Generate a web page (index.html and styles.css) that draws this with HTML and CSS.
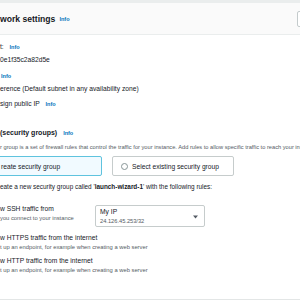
FILE: index.html
```html
<!DOCTYPE html>
<html>
<head>
<meta charset="utf-8">
<link rel="stylesheet" href="styles.css">
</head>
<body>
<div class="page">
  <div class="topband"></div>
  <div class="header">
    <span class="title">work settings</span>
    <span class="info">Info</span>
    <span class="edit"></span>
  </div>
  <div class="content">
    <div class="field f1">
      <div class="label">t: <span class="info">Info</span></div>
      <div class="value">0e1f35c2a82d5e</div>
    </div>
    <div class="field f2">
      <div class="label"><span class="info first">Info</span></div>
      <div class="value">erence (Default subnet in any availability zone)</div>
    </div>
    <div class="field f3">
      <div class="label">sign public IP <span class="info">Info</span></div>
    </div>

    <div class="sg">
      <div class="sg-title">(security groups) <span class="info">Info</span></div>
      <div class="sg-desc">r group is a set of firewall rules that control the traffic for your instance. Add rules to allow specific traffic to reach your instance.</div>
      <div class="tiles">
        <div class="tile selected">reate security group</div>
        <div class="tile"><span class="radio"></span>Select existing security group</div>
      </div>
      <div class="sg-note">eate a new security group called '<b>launch-wizard-1</b>' with the following rules:</div>
    </div>

    <div class="rules">
      <div class="rule first-rule">
        <div class="rule-text">
          <div class="rule-label">w SSH traffic from</div>
          <div class="rule-sub">you connect to your instance</div>
        </div>
        <div class="select">
          <div class="select-text">
            <div class="select-main">My IP</div>
            <div class="select-sub">24.126.45.253/32</div>
          </div>
          <svg class="caret" width="5" height="4" viewBox="0 0 5 4"><path d="M0 0.5 H5 L2.5 3.5 Z" fill="#545b64"/></svg>
        </div>
      </div>
      <div class="rule">
        <div class="rule-text">
          <div class="rule-label">w HTTPS traffic from the internet</div>
          <div class="rule-sub">t up an endpoint, for example when creating a web server</div>
        </div>
      </div>
      <div class="rule">
        <div class="rule-text">
          <div class="rule-label">w HTTP traffic from the internet</div>
          <div class="rule-sub">t up an endpoint, for example when creating a web server</div>
        </div>
      </div>
    </div>
    <div class="footer-line"></div>
  </div>
</div>
</body>
</html>
```

FILE: styles.css
```css
html, body {
  margin: 0;
  padding: 0;
  width: 300px;
  height: 300px;
  overflow: hidden;
  background: #ffffff;
}
.page {
  font-family: "Liberation Sans", Arial, sans-serif;
  color: #16191f;
  font-size: 6.7px;
  white-space: nowrap;
}
.topband {
  height: 3px;
  background: #eaeded;
}
.header {
  height: 31px;
  background: #fafafa;
  border-bottom: 1px solid #eaeded;
  display: flex;
  align-items: center;
}
.title {
  font-weight: 700;
  font-size: 8.6px;
}
.info {
  color: #0073bb;
  font-weight: 700;
  font-size: 5.5px;
  margin-left: 4px;
}
.info.first {
  margin-left: 1px;
}
.edit {
  margin-left: auto;
  margin-right: -23px;
  width: 24px;
  height: 14px;
  background: #ffffff;
  border: 1px solid #c4cbcc;
  border-radius: 2px;
}
.content {
  display: flex;
  flex-direction: column;
}
.field .label, .field .value {
  line-height: 12px;
}
.field .value {
  margin-top: 1px;
}
.f1 { margin-top: 6px; }
.f2 { margin-top: 4px; }
.f3 { margin-top: 3px; }
.sg { margin-top: 17px; }
.sg-title {
  font-weight: 700;
  font-size: 7px;
  line-height: 12px;
}
.sg-desc {
  font-size: 5.7px;
  color: #545b64;
  line-height: 10px;
  margin-top: 3px;
}
.tiles {
  display: flex;
  gap: 10px;
  margin-top: 4px;
}
.tile {
  height: 18px;
  border: 1px solid #c6cccc;
  border-radius: 2px;
  display: flex;
  align-items: center;
  width: 114px;
  padding-left: 8px;
  box-sizing: content-box;
}
.tile:not(.selected) {
  width: 112px;
}
.tile.selected {
  margin-left: -10px;
  padding-left: 10px;
  width: 100px;
  background: #f1faff;
  border-color: #5fc3de;
}
.radio {
  width: 5px;
  height: 5px;
  border: 1px solid #879596;
  border-radius: 50%;
  margin-right: 4px;
  background: #fff;
}
.sg-note {
  margin-top: 5px;
  line-height: 12px;
  font-size: 6.4px;
}
.rules {
  margin-top: 11px;
  display: flex;
  flex-direction: column;
  gap: 4px;
}
.rule {
  display: flex;
}
.rule.first-rule {
  margin-bottom: 2px;
}
.rule-text {
  width: 95px;
}
.rule-label {
  line-height: 10px;
}
.rule-sub {
  font-size: 5.8px;
  color: #545b64;
  line-height: 9px;
}
.select {
  margin-top: 1px;
  border: 1px solid #c6cccc;
  border-radius: 2px;
  display: flex;
  align-items: flex-start;
  padding: 1px 6px 0 4px;
  box-sizing: border-box;
  width: 110px;
  height: 22px;
}
.select-text {
  flex: 1;
}
.select-main {
  line-height: 10px;
}
.select-sub {
  font-size: 5.7px;
  color: #545b64;
  line-height: 8px;
}
.caret {
  display: block;
  margin-top: 8px;
}
.footer-line {
  margin-top: 24px;
  height: 2px;
  background: #e3e6e6;
}
```
